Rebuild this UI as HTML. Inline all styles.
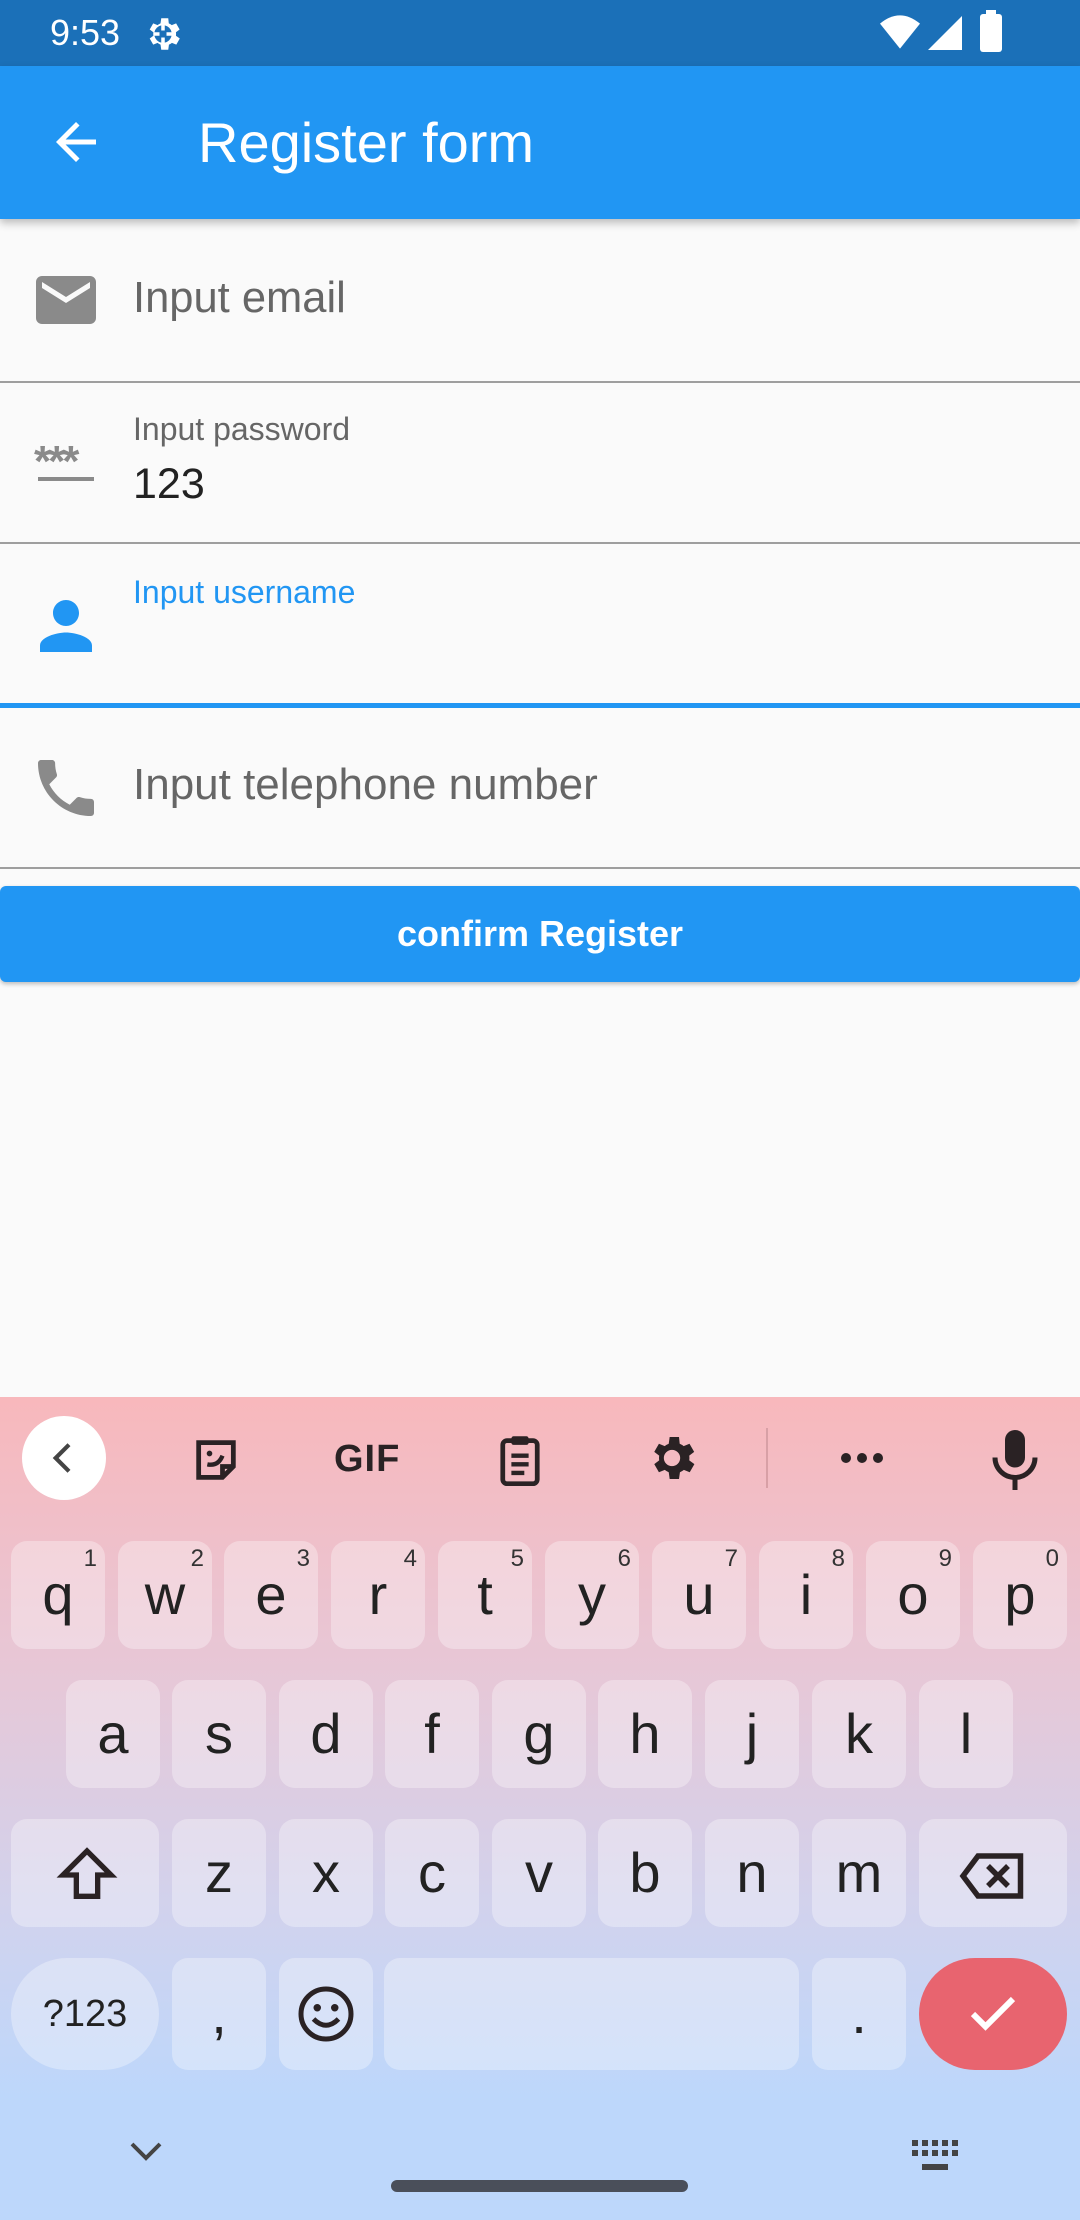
<!DOCTYPE html>
<html><head><meta charset="utf-8"><style>
*{margin:0;padding:0;box-sizing:border-box}
body{width:1080px;height:2220px;background:#fafafa;font-family:"Liberation Sans",sans-serif;position:relative;overflow:hidden}
.a{position:absolute}
.div{position:absolute;left:0;width:1080px;height:2px;background:#9e9e9e}
.key{position:absolute;width:94px;height:108px;border-radius:16px;background:rgba(255,255,255,0.32);font-size:56px;color:#222;text-align:center;line-height:108px}
.key sup{position:absolute;right:8px;top:4px;font-size:24px;line-height:28px;color:#333}
.ic{position:absolute}
</style></head><body>
<div class="a" style="left:0;top:0;width:1080px;height:66px;background:#1b70b8"></div>
<div class="a" style="left:50px;top:12px;color:#fff;font-size:36px">9:53</div>
<svg class="ic" style="left:142px;top:13px" width="42" height="42" viewBox="0 0 24 24"><path fill="#fff" d="M19.4 13a7.5 7.5 0 0 0 0-2l2.1-1.6-2-3.5-2.5 1a7 7 0 0 0-1.7-1L15 3h-4l-.4 2.9a7 7 0 0 0-1.7 1l-2.5-1-2 3.5L6.5 11a7.5 7.5 0 0 0 0 2l-2.1 1.6 2 3.5 2.5-1a7 7 0 0 0 1.7 1L11 21h4l.4-2.9a7 7 0 0 0 1.7-1l2.5 1 2-3.5zM13 16.9V14h-2v2.9a5 5 0 0 1-3.9-3.9H10v-2H7.1A5 5 0 0 1 11 7.1V10h2V7.1a5 5 0 0 1 3.9 3.9H14v2h2.9a5 5 0 0 1-3.9 3.9z"/></svg>
<svg class="ic" style="left:880px;top:14px" width="40" height="36" viewBox="0 0 24 20"><path fill="#fff" d="M12 20L0 5Q12-5 24 5z"/></svg>
<svg class="ic" style="left:928px;top:16px" width="34" height="34" viewBox="0 0 24 24"><path fill="#fff" d="M24 0V24H0z"/></svg>
<div class="a" style="left:980px;top:14px;width:22px;height:38px;background:#fff;border-radius:3px"></div>
<div class="a" style="left:986px;top:10px;width:10px;height:6px;background:#fff"></div>
<div class="a" style="left:0;top:66px;width:1080px;height:153px;background:#2196f3;box-shadow:0 4px 8px rgba(0,0,0,0.25)"></div>
<svg class="ic" style="left:46px;top:112px" width="60" height="60" viewBox="0 0 24 24"><path fill="#fff" d="M20 11H7.83l5.59-5.59L12 4l-8 8 8 8 1.41-1.41L7.83 13H20z"/></svg>
<div class="a" style="left:198px;top:110px;color:#fff;font-size:56px;line-height:66px">Register form</div>

<svg class="ic" style="left:36px;top:270px" width="60" height="60" viewBox="2 2 20 20"><path fill="#8a8a8a" d="M20 4H4c-1.1 0-2 .9-2 2v12c0 1.1.9 2 2 2h16c1.1 0 2-.9 2-2V6c0-1.1-.9-2-2-2zm0 4l-8 5-8-5V6l8 5 8-5z"/></svg>
<div class="a" style="left:133px;top:274px;font-size:43.5px;color:#666">Input email</div>
<div class="div" style="top:381px"></div>

<div class="a" style="left:133px;top:411px;font-size:32px;color:#666">Input password</div>
<div class="a" style="left:34px;top:440px;font-size:44px;color:#8a8a8a;letter-spacing:-3px;font-weight:bold;line-height:44px">***</div>
<div class="a" style="left:38px;top:477px;width:56px;height:4px;background:#8a8a8a"></div>
<div class="a" style="left:133px;top:460px;font-size:43px;color:#222">123</div>
<div class="div" style="top:542px"></div>

<div class="a" style="left:133px;top:574px;font-size:32px;color:#2196f3">Input username</div>
<svg class="ic" style="left:40px;top:600px" width="52" height="52" viewBox="4 4 16 16"><path fill="#2196f3" d="M12 12c2.21 0 4-1.79 4-4s-1.79-4-4-4-4 1.79-4 4 1.79 4 4 4zm0 2c-2.67 0-8 1.34-8 4v2h16v-2c0-2.66-5.33-4-8-4z"/></svg>
<div class="a" style="left:0;top:703px;width:1080px;height:5px;background:#2196f3"></div>

<svg class="ic" style="left:38px;top:760px" width="56" height="56" viewBox="3 3 18 18"><path fill="#8a8a8a" d="M6.62 10.79c1.44 2.83 3.76 5.14 6.59 6.59l2.2-2.2c.27-.27.67-.36 1.02-.24 1.12.37 2.33.57 3.57.57.55 0 1 .45 1 1V20c0 .55-.45 1-1 1-9.39 0-17-7.61-17-17 0-.55.45-1 1-1h3.5c.55 0 1 .45 1 1 0 1.25.2 2.45.57 3.57.11.35.03.74-.25 1.02l-2.2 2.2z"/></svg>
<div class="a" style="left:133px;top:760px;font-size:44px;color:#666">Input telephone number</div>
<div class="div" style="top:867px"></div>

<div class="a" style="left:0;top:886px;width:1080px;height:96px;background:#2196f3;border-radius:6px;box-shadow:0 2px 4px rgba(0,0,0,0.25);color:#fff;font-size:36px;text-align:center;line-height:96px;font-weight:bold">confirm Register</div>

<div class="a" style="left:0;top:1397px;width:1080px;height:823px;background:linear-gradient(#f8b8bc 0%,#e6c8d8 35%,#cfd3ef 65%,#bdd7fb 85%,#bdd7fb 100%)"></div>
<div class="a" style="left:22px;top:1416px;width:84px;height:84px;border-radius:50%;background:#fff"></div>
<svg class="ic" style="left:44px;top:1438px" width="40" height="40" viewBox="0 0 24 24"><path fill="none" stroke="#444" stroke-width="2.5" d="M15 4l-8 8 8 8"/></svg>
<svg class="ic" style="left:190px;top:1434px" width="52" height="52" viewBox="0 0 24 24"><path fill="none" stroke="#2a2224" stroke-width="2.2" d="M4 4h16v11l-5 5H4z M15 20v-5h5"/><circle cx="9" cy="9" r="1.3" fill="#2a2224"/><path fill="none" stroke="#2a2224" stroke-width="2" d="M8 14q5 1 7-4"/></svg>
<div class="a" style="left:334px;top:1438px;font-size:38px;font-weight:bold;color:#2a2224;letter-spacing:1px">GIF</div>
<svg class="ic" style="left:494px;top:1432px" width="52" height="56" viewBox="0 0 24 26"><rect x="4" y="4" width="16" height="20" rx="2" fill="none" stroke="#2a2224" stroke-width="2.2"/><rect x="8" y="2" width="8" height="4" rx="1" fill="#2a2224"/><path stroke="#2a2224" stroke-width="2" d="M8 11h8M8 15h8M8 19h6"/></svg>
<svg class="ic" style="left:644px;top:1430px" width="56" height="56" viewBox="0 0 24 24"><path fill="#2a2224" d="M19.4 13a7.5 7.5 0 0 0 0-2l2.1-1.6-2-3.5-2.5 1a7 7 0 0 0-1.7-1L15 3h-4l-.4 2.9a7 7 0 0 0-1.7 1l-2.5-1-2 3.5L6.5 11a7.5 7.5 0 0 0 0 2l-2.1 1.6 2 3.5 2.5-1a7 7 0 0 0 1.7 1L11 21h4l.4-2.9a7 7 0 0 0 1.7-1l2.5 1 2-3.5zM12 15.5a3.5 3.5 0 1 1 0-7 3.5 3.5 0 0 1 0 7z"/></svg>
<div class="a" style="left:766px;top:1428px;width:2px;height:60px;background:#d8a0a6"></div>
<svg class="ic" style="left:840px;top:1448px" width="44" height="20" viewBox="0 0 22 10"><circle cx="3" cy="5" r="2.5" fill="#2a2224"/><circle cx="11" cy="5" r="2.5" fill="#2a2224"/><circle cx="19" cy="5" r="2.5" fill="#2a2224"/></svg>
<svg class="ic" style="left:990px;top:1430px" width="50" height="60" viewBox="0 0 20 24"><rect x="6" y="0" width="8" height="15" rx="4" fill="#2a2224"/><path fill="none" stroke="#2a2224" stroke-width="2" d="M2 11a8 8 0 0 0 16 0M10 19v5"/></svg>

<div class="key" style="left:11px;top:1541px">q<sup>1</sup></div>
<div class="key" style="left:118px;top:1541px">w<sup>2</sup></div>
<div class="key" style="left:224px;top:1541px">e<sup>3</sup></div>
<div class="key" style="left:331px;top:1541px">r<sup>4</sup></div>
<div class="key" style="left:438px;top:1541px">t<sup>5</sup></div>
<div class="key" style="left:545px;top:1541px">y<sup>6</sup></div>
<div class="key" style="left:652px;top:1541px">u<sup>7</sup></div>
<div class="key" style="left:759px;top:1541px">i<sup>8</sup></div>
<div class="key" style="left:866px;top:1541px">o<sup>9</sup></div>
<div class="key" style="left:973px;top:1541px">p<sup>0</sup></div>

<div class="key" style="left:66px;top:1680px">a</div>
<div class="key" style="left:172px;top:1680px">s</div>
<div class="key" style="left:279px;top:1680px">d</div>
<div class="key" style="left:385px;top:1680px">f</div>
<div class="key" style="left:492px;top:1680px">g</div>
<div class="key" style="left:598px;top:1680px">h</div>
<div class="key" style="left:705px;top:1680px">j</div>
<div class="key" style="left:812px;top:1680px">k</div>
<div class="key" style="left:919px;top:1680px">l</div>

<div class="key" style="left:11px;top:1819px;width:148px"></div>
<svg class="ic" style="left:55px;top:1843px" width="64" height="64" viewBox="0 0 24 24"><path fill="none" stroke="#2a2224" stroke-width="2" d="M12 3L3 12h5v8h8v-8h5z"/></svg>
<div class="key" style="left:172px;top:1819px">z</div>
<div class="key" style="left:279px;top:1819px">x</div>
<div class="key" style="left:385px;top:1819px">c</div>
<div class="key" style="left:492px;top:1819px">v</div>
<div class="key" style="left:598px;top:1819px">b</div>
<div class="key" style="left:705px;top:1819px">n</div>
<div class="key" style="left:812px;top:1819px">m</div>
<div class="key" style="left:919px;top:1819px;width:148px"></div>
<svg class="ic" style="left:958px;top:1850px" width="70" height="52" viewBox="0 0 28 20"><path fill="none" stroke="#2a2224" stroke-width="2.2" d="M8 2h17v16H8L2 10z M12 6l8 8M20 6l-8 8"/></svg>

<div class="key" style="left:11px;top:1958px;width:148px;height:112px;border-radius:56px;font-size:38px;line-height:112px">?123</div>
<div class="key" style="left:172px;top:1958px;height:112px;line-height:112px">,</div>
<div class="key" style="left:279px;top:1958px;height:112px"></div>
<svg class="ic" style="left:296px;top:1984px" width="60" height="60" viewBox="0 0 24 24"><circle cx="12" cy="12" r="10" fill="none" stroke="#2a2224" stroke-width="2"/><circle cx="8.5" cy="9.5" r="1.5" fill="#2a2224"/><circle cx="15.5" cy="9.5" r="1.5" fill="#2a2224"/><path fill="none" stroke="#2a2224" stroke-width="2" d="M7 14q5 5 10 0"/></svg>
<div class="key" style="left:384px;top:1958px;width:415px;height:112px"></div>
<div class="key" style="left:812px;top:1958px;height:112px;line-height:112px">.</div>
<div class="a" style="left:919px;top:1958px;width:148px;height:112px;border-radius:56px;background:#e8646f"></div>
<svg class="ic" style="left:963px;top:1984px" width="60" height="60" viewBox="0 0 24 24"><path fill="none" stroke="#fff" stroke-width="2.4" d="M4 12l5 5L20 6"/></svg>

<svg class="ic" style="left:128px;top:2140px" width="36" height="24" viewBox="0 0 18 12"><path fill="none" stroke="#444" stroke-width="2" d="M2 2l7 7 7-7"/></svg>
<svg class="ic" style="left:912px;top:2140px" width="46" height="32" viewBox="0 0 23 16"><g fill="#444"><rect x="0" y="0" width="3" height="3"/><rect x="5" y="0" width="3" height="3"/><rect x="10" y="0" width="3" height="3"/><rect x="15" y="0" width="3" height="3"/><rect x="20" y="0" width="3" height="3"/><rect x="0" y="5" width="3" height="3"/><rect x="5" y="5" width="3" height="3"/><rect x="10" y="5" width="3" height="3"/><rect x="15" y="5" width="3" height="3"/><rect x="20" y="5" width="3" height="3"/><rect x="5" y="12" width="13" height="3"/></g></svg>
<div class="a" style="left:391px;top:2180px;width:297px;height:12px;border-radius:6px;background:#4a4f5a"></div>
</body></html>
